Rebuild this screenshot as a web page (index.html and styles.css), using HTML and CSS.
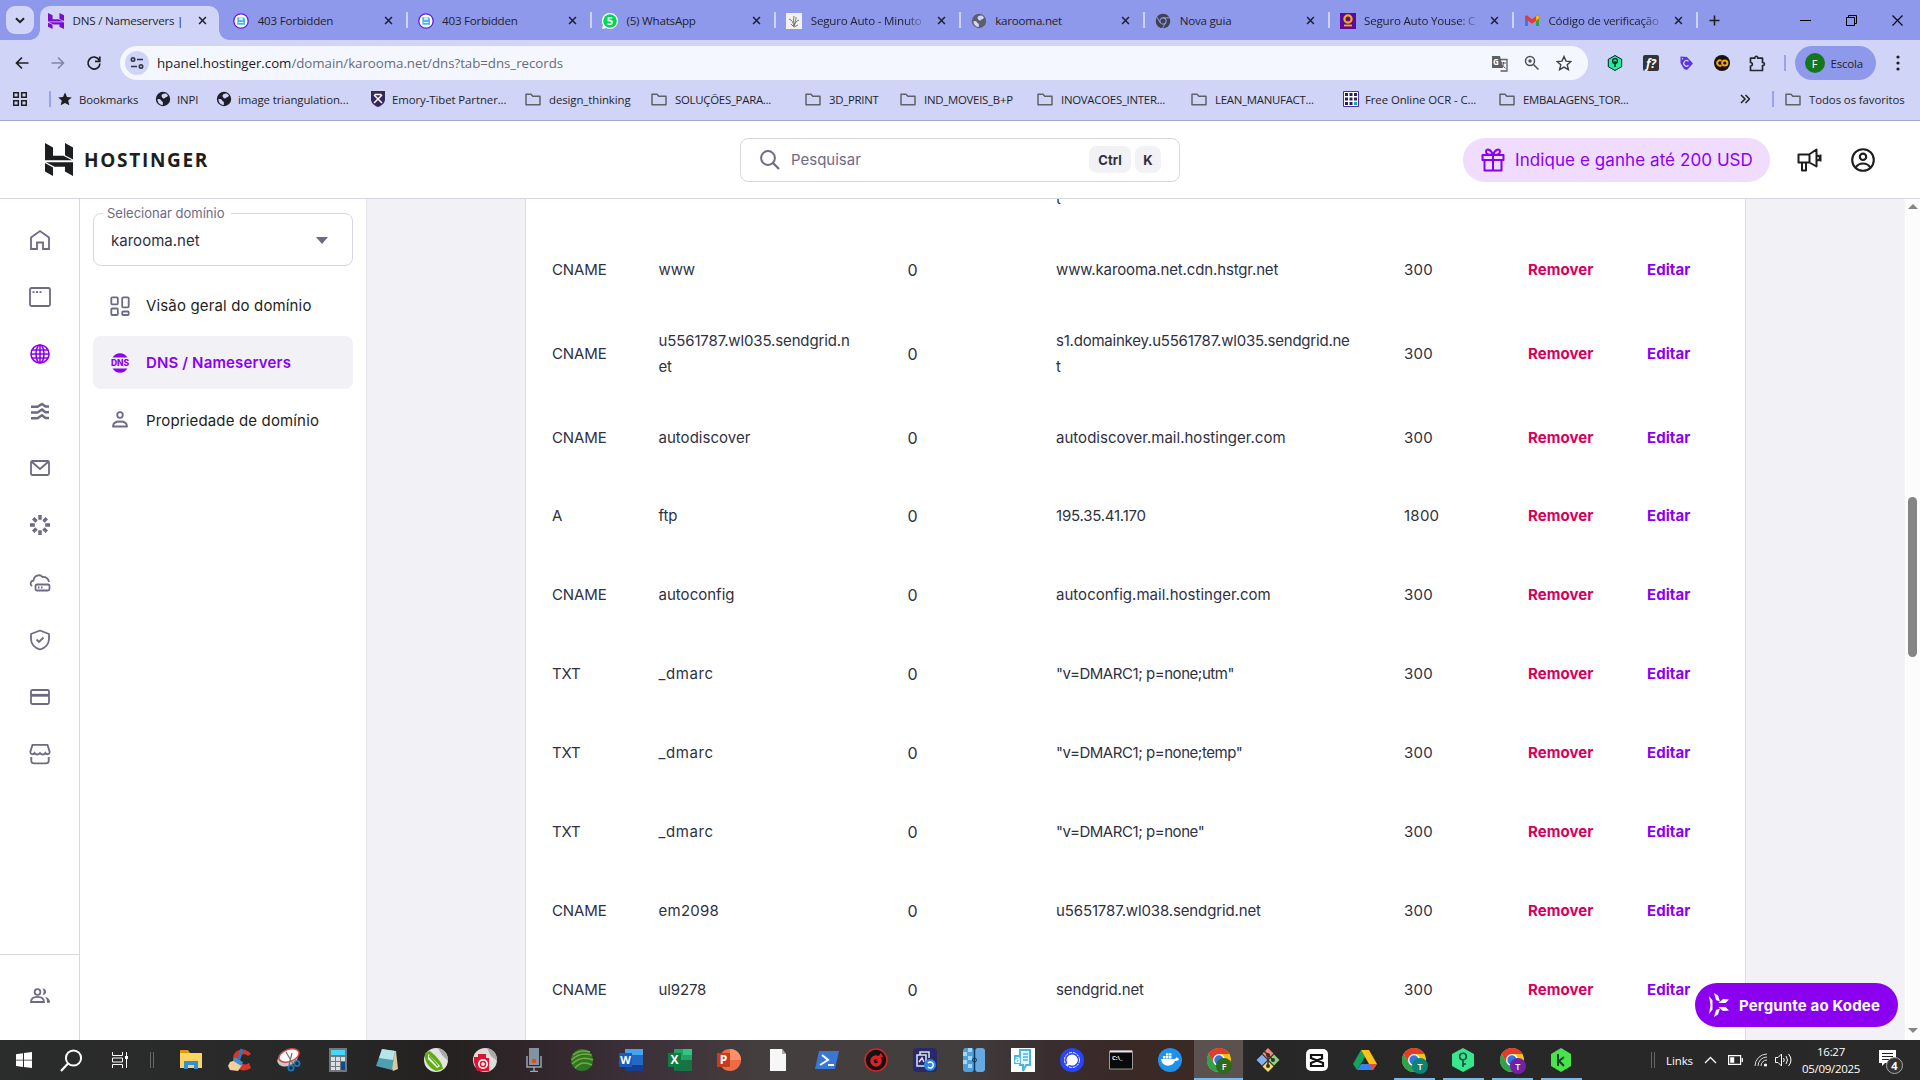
FILE: index.html
```html
<!DOCTYPE html>
<html lang="pt-BR">
<head>
<meta charset="utf-8">
<title>DNS / Nameservers | Hostinger</title>
<link rel="stylesheet" href="styles.css">
</head>
<body>
<svg class="defs" aria-hidden="true">
  <symbol id="x" viewBox="0 0 10 10"><path d="M1.2 1.2l7.6 7.6M8.8 1.2L1.2 8.8" stroke="#1f1f2b" stroke-width="1.7"/></symbol>
  <symbol id="folder" viewBox="0 0 16 16"><path d="M1 3.2h5l1.8 2H15v8.6H1z" fill="none" stroke="#5f6368" stroke-width="1.5" stroke-linejoin="round"/></symbol>
  <symbol id="globe" viewBox="0 0 16 16"><circle cx="8" cy="8" r="7.2" fill="currentColor"/><path d="M2.5 8.2c1.8-.4 3.2.3 3.6 1.3.4 1.1 1.8.6 1.8 2.2v2.2c-3 .2-5.5-2.300-5.400-5.700zM6.500 4.500c.8-1.500 2.500-2.200 4.300-1.900 1 .6 1.700 1.300 2.200 2.200-1 .5-.7 1.500-1.900 1.500S10 7.800 8.800 7.600 6.700 6.200 6.500 4.500z" fill="#d0d5f8"/></symbol>
  <symbol id="hmark" viewBox="0 0 28 33"><path d="M0 0l8 4.500v8.300h10.500L27 17.300H0zM20 0l8 4.500v12l-8-4.300zM0 20l8 4.400V33l-8-4.500zM1 19.300h27V33l-8-4.500v-4.800H9.600z" fill="currentColor"/></symbol>
  <symbol id="disk" viewBox="0 0 16 16"><circle cx="8" cy="8" r="7.200" fill="#fff" stroke="#5b1fe0" stroke-width="1.300"/><path d="M4.300 4.300h6.200l1.500 1.300v6.200H4.300z" fill="#4db4f4"/><path d="M6 4.300h4v2.800H6z" fill="#c9e9fc"/><path d="M5.500 9.500h5" stroke="#e7f6ff"/></symbol>
  <symbol id="chrome" viewBox="0 0 24 24"><circle cx="12" cy="12" r="12" fill="#fbc116"/><path d="M1.600 6A12 12 0 0 1 22.400 6H12L6.800 15z" fill="#e33b2e"/><path d="M1.600 6L7 15.500l5.500 2.500L12 24A12 12 0 0 1 1.600 6z" fill="#2fa24c"/><circle cx="12" cy="12" r="6" fill="#fff"/><circle cx="12" cy="12" r="4.700" fill="#2f78e4"/></symbol>
</svg>

<header class="browser">
  <div class="tabstrip">
    <div class="tabmenu"><svg width="10" height="7" viewBox="0 0 10 7"><path d="M1 1.200l4 4 4-4" fill="none" stroke="#1f1f1f" stroke-width="2"/></svg></div>
    <div class="tab tab-active"><svg class="fav purple" viewBox="0 0 28 33" preserveAspectRatio="none"><use href="#hmark"/></svg><span class="title">DNS / Nameservers |</span><svg class="close"><use href="#x"/></svg></div>
    <div class="tab"><svg class="fav"><use href="#disk"/></svg><span class="title">403 Forbidden</span><svg class="close"><use href="#x"/></svg></div>
    <div class="tab"><svg class="fav"><use href="#disk"/></svg><span class="title">403 Forbidden</span><svg class="close"><use href="#x"/></svg></div>
    <div class="tab"><svg class="fav" viewBox="0 0 16 16"><path d="M8 0a8 8 0 1 1 0 16c-1.500 0-2.500-.3-3.800-1L0 16l1-4A8 8 0 0 1 8 0z" fill="#fff"/><circle cx="8" cy="8" r="6.800" fill="#00d757"/><text x="8" y="12" text-anchor="middle" class="glyph" font-size="11">5</text></svg><span class="title">(5) WhatsApp</span><svg class="close"><use href="#x"/></svg></div>
    <div class="tab"><svg class="fav" viewBox="0 0 16 16"><path d="M0 0h16v16H0z" fill="#f1f1ef"/><path d="M3 6c3 1 4 3 5 7M8 3c-1 4 0 6 0 10M10 4c0 3-1 6-2 9M13 7c-3 1-4 3-5 6M5 11l3 3 4-2" fill="none" stroke="#777"/></svg><span class="title fade">Seguro Auto - Minuto</span><svg class="close"><use href="#x"/></svg></div>
    <div class="tab"><svg class="fav gray"><use href="#globe"/></svg><span class="title">karooma.net</span><svg class="close"><use href="#x"/></svg></div>
    <div class="tab"><svg class="fav" viewBox="0 0 16 16"><circle cx="8" cy="8" r="7.300" fill="#3f4350"/><circle cx="8" cy="8" r="3.100" fill="#3f4350" stroke="#8f99ec" stroke-width="1.100"/><path d="M8 4.800h7M5.200 9.600L1.700 3.700M10.700 9.600L7.300 15.500" stroke="#8f99ec"/></svg><span class="title">Nova guia</span><svg class="close"><use href="#x"/></svg></div>
    <div class="tab"><svg class="fav" viewBox="0 0 16 16"><path d="M0 0h16v16H0z" fill="#5b0a9e"/><circle cx="8" cy="6" r="3.600" fill="none" stroke="#f9b000" stroke-width="2.200"/><path d="M4 12.500h8" stroke="#f9b000" stroke-width="1.800"/></svg><span class="title fade">Seguro Auto Youse: C</span><svg class="close"><use href="#x"/></svg></div>
    <div class="tab"><svg class="fav" viewBox="0 0 16 16"><path d="M1 4v9h3V7z" fill="#3b79ef"/><path d="M15 4v9h-3V7z" fill="#2ba24c"/><path d="M1 3.500C1 2.500 2.500 2 3.500 2.800L8 6.300l4.500-3.500c1-.8 2.500-.3 2.500.7v2L8 10.800 1 5.500z" fill="#ea3a2d"/><path d="M12 3.200c1.500-1.200 3-.5 3 .8v1.500L12 7.800z" fill="#fbbc05"/></svg><span class="title fade">Código de verificação</span><svg class="close"><use href="#x"/></svg></div>
    <svg class="newtab" viewBox="0 0 12 12"><path d="M6 .5v11M.5 6h11" stroke="#1f1f1f" stroke-width="1.700"/></svg>
    <div class="wincontrols">
      <svg width="11" height="12" viewBox="0 0 11 12"><path d="M0 6.500h11" stroke="#000"/></svg>
      <svg width="11" height="11" viewBox="0 0 11 11"><path d="M.5 2.500h8v8h-8zM2.500 2.500v-2h8v8h-2" fill="none" stroke="#000"/></svg>
      <svg width="11" height="11" viewBox="0 0 11 11"><path d="M.5.500l10 10M10.500.5l-10 10" stroke="#000" stroke-width="1.100"/></svg>
    </div>
  </div>
  <div class="toolbar">
    <div class="navbtns">
      <svg width="16" height="16" viewBox="0 0 16 16"><path d="M14.500 8H2.500M8 2.500L2.500 8 8 13.500" fill="none" stroke="#1f1f1f" stroke-width="1.700"/></svg>
      <svg width="16" height="16" viewBox="0 0 16 16"><path d="M1.500 8h12M8 2.500l5.500 5.500L8 13.500" fill="none" stroke="#8286a3" stroke-width="1.600"/></svg>
      <svg width="16" height="16" viewBox="0 0 16 16"><path d="M13.200 5A6 6 0 1 0 14 8.500M13.800 1.500v4.800H9" fill="none" stroke="#1f1f1f" stroke-width="1.700"/></svg>
    </div>
    <div class="omnibox">
      <div class="siteinfo"><svg width="14" height="14" viewBox="0 0 14 14"><g fill="none" stroke="#30333d" stroke-width="1.600"><circle cx="3" cy="3.500" r="1.700"/><path d="M7 3.500h6M1 10.500h6"/><circle cx="11" cy="10.500" r="1.700"/></g></svg></div>
      <span class="url"><b>hpanel.hostinger.com</b>/domain/karooma.net/dns?tab=dns_records</span>
      <div class="omniicons">
        <svg width="17" height="17" viewBox="0 0 17 17"><path d="M1 1h8l3 12H1z" fill="#5d6066"/><path d="M8 4.500h8V16H9.500" fill="none" stroke="#5d6066" stroke-width="1.300"/><text x="2" y="9.500" class="glyph" font-size="8">G</text><path d="M10 8h5M12.500 7v1c0 2-1 4-2.500 5M11 9.500l3.500 4" fill="none" stroke="#5d6066"/></svg>
        <svg width="16" height="16" viewBox="0 0 16 16"><g fill="none" stroke="#4c4f57" stroke-width="1.500"><circle cx="6" cy="6" r="4.500"/><path d="M9.500 9.500l5 5"/></g><circle cx="6" cy="6" r="1.700" fill="#4c4f57"/></svg>
        <svg width="16" height="16" viewBox="0 0 16 16"><path d="M8 1.500l2 4.600 5 .4-3.800 3.300 1.200 4.900L8 12.100l-4.400 2.600 1.200-4.900L1 6.500l5-.4z" fill="none" stroke="#3d4048" stroke-width="1.400"/></svg>
      </div>
    </div>
    <div class="extensions">
      <svg width="16" height="16" viewBox="0 0 16 16"><path d="M8 .5l6.700 3.800v7.400L8 15.500 1.300 11.700V4.300z" fill="#1feea0" stroke="#071c17"/><circle cx="8" cy="6" r="2.400" fill="none" stroke="#071c17" stroke-width="1.300"/><path d="M8 6v6" stroke="#071c17" stroke-width="1.300"/></svg>
      <svg width="16" height="16" viewBox="0 0 16 16"><rect width="16" height="16" rx="2" fill="#333338"/><text x="8" y="12.500" text-anchor="middle" class="glyph ital" font-size="12">f?</text></svg>
      <svg width="16" height="16" viewBox="0 0 16 16"><path d="M2.500 1.500l6.500.5 6 6.500-6 6.500-3-1-3.500-6z" fill="#5b34e8"/><path d="M10.500 6.300a2.800 2.800 0 1 0 0 4" fill="none" stroke="#d0d5f8" stroke-width="1.200"/><circle cx="4.500" cy="3.800" r=".8" fill="#d0d5f8"/></svg>
      <svg width="16" height="16" viewBox="0 0 16 16"><circle cx="8" cy="8" r="8" fill="#17120c"/><g fill="none" stroke="#f0a31b" stroke-width="2"><path d="M7.500 5.800a2.700 2.700 0 1 0 0 4.400"/><circle cx="10.800" cy="8" r="2.600"/></g></svg>
      <svg width="17" height="17" viewBox="0 0 17 17"><path d="M1.500 3.200h4.300c-.2-2.500 3.200-2.500 3 0h4.700v4.300c2.500-.2 2.500 3.200 0 3v5H1.500V11c2.500 0 2.500-3.500 0-3.500z" fill="none" stroke="#25272e" stroke-width="1.700" stroke-linejoin="round"/></svg>
      <i class="vbar"></i>
    </div>
    <div class="profile"><span class="avatar">F</span>Escola</div>
    <svg class="kebab" viewBox="0 0 4 16"><circle cx="2" cy="2" r="1.600"/><circle cx="2" cy="8" r="1.600"/><circle cx="2" cy="14" r="1.600"/></svg>
  </div>
  <nav class="bookmarks">
    <span class="bm"><svg width="14" height="14" viewBox="0 0 14 14"><path d="M.7.700h4.600v4.600H.7zM8.700.700h4.600v4.600H8.700zM.7 8.700h4.600v4.600H.7zM8.700 8.700h4.600v4.600H8.700z" fill="none" stroke="#1f1f1f" stroke-width="1.500"/></svg><i class="vbar"></i></span>
    <span class="bm tight"><svg viewBox="0 0 16 16"><path d="M8 1.500l2 4.400 4.800.5-3.600 3.200 1.100 4.700L8 11.900l-4.300 2.400 1.100-4.700L1.200 6.400 6 5.900z" fill="#1f1f1f"/></svg>Bookmarks</span>
    <span class="bm tight"><svg><use href="#globe"/></svg>INPI</span>
    <span class="bm tight"><svg><use href="#globe"/></svg>image triangulation...</span>
    <span class="bm tight"><svg viewBox="0 0 16 16"><path d="M1 0h14v8c0 4-3 6.500-7 8-4-1.500-7-4-7-8z" fill="#35265f"/><path d="M4 4l8 8M12 4l-8 8M4.500 3.500h7" stroke="#fff" stroke-width="1.500"/></svg>Emory-Tibet Partner...</span>
    <span class="bm"><svg><use href="#folder"/></svg>design_thinking</span>
    <span class="bm up"><svg><use href="#folder"/></svg>SOLUÇÕES_PARA...</span>
    <span class="bm up"><svg><use href="#folder"/></svg>3D_PRINT</span>
    <span class="bm up"><svg><use href="#folder"/></svg>IND_MOVEIS_B+P</span>
    <span class="bm up"><svg><use href="#folder"/></svg>INOVACOES_INTER...</span>
    <span class="bm up"><svg><use href="#folder"/></svg>LEAN_MANUFACT...</span>
    <span class="bm tight"><svg viewBox="0 0 16 16"><path d="M.5.500h15v15H.5z" fill="#fff" stroke="#4a2eae"/><path d="M2 2h3v3H2zM6.500 2h3v3h-3zM11 2h3v3h-3zM2 6.500h3v3H2zM6.500 6.500h3v3h-3zM11 6.500h3v3h-3zM2 11h3v3H2zM6.500 11h3v3h-3z" fill="#202168"/><path d="M11 11h3v3h-3z" fill="#17a89e"/></svg>Free Online OCR - C...</span>
    <span class="bm up"><svg><use href="#folder"/></svg>EMBALAGENS_TOR...</span>
    <span class="bm"><svg width="10" height="10" viewBox="0 0 10 10" class="more"><path d="M1 1l4 4-4 4M5.500 1l4 4-4 4" fill="none" stroke="#1f1f1f" stroke-width="1.500"/></svg><i class="vbar"></i></span>
    <span class="bm"><svg><use href="#folder"/></svg>Todos os favoritos</span>
  </nav>
</header>

<header class="apphead">
  <div class="logo"><svg width="28" height="33"><use href="#hmark"/></svg><span>HOSTINGER</span></div>
  <div class="search">
    <svg width="20" height="20" viewBox="0 0 20 20"><circle cx="8" cy="8" r="6.900" fill="none" stroke="#6d6a85" stroke-width="2"/><path d="M13 13l6 6" stroke="#6d6a85" stroke-width="2.200"/></svg>
    <span class="ph">Pesquisar</span><kbd class="ctrl">Ctrl</kbd><kbd>K</kbd>
  </div>
  <div class="headright">
    <a class="gift"><svg width="24" height="24" viewBox="0 0 24 24"><path d="M1.500 7h21v5h-21zM3.500 12h17v10.500h-17zM12 7v15.500M12 7C10 1 5 0 5 3.800 5 6 7 7 12 7zM12 7c2-6 7-7 7-3.200C19 6 17 7 12 7z" fill="none" stroke="#8c00f0" stroke-width="2" stroke-linejoin="round"/></svg><span>Indique e ganhe até 200 USD</span></a>
    <svg width="26" height="24" viewBox="0 0 26 24"><path d="M19.500 1.500v17l-7-4H1.500v-8H12zM12.500 7v7.500M5 15v7.500h4V15M19.500 7.500c4.500-.5 4.500 5.500 0 5M23.500 6.500v7" fill="none" stroke="#1d1e20" stroke-width="2" stroke-linejoin="round"/></svg>
    <svg width="24" height="24" viewBox="0 0 24 24"><g fill="none" stroke="#1d1e20" stroke-width="2.100"><circle cx="12" cy="12" r="10.800"/><circle cx="12" cy="8.800" r="3.200"/><path d="M4.800 19.500c3-5.300 11.400-5.300 14.400 0"/></g></svg>
  </div>
</header>

<div class="app">
  <nav class="rail">
    <div class="railtop">
      <svg viewBox="0 0 24 24"><path d="M3 9.500L12 3l9 6.500V21h-6v-6.500H9V21H3z"/></svg>
      <svg viewBox="0 0 24 24"><rect x="2" y="3" width="20" height="18" rx="1.500"/><path d="M4.500 7.200h2M8 7.200h2M11.500 7.200h2"/></svg>
      <svg viewBox="0 0 24 24" class="on"><circle cx="12" cy="12" r="9"/><ellipse cx="12" cy="12" rx="4" ry="9"/><path d="M3 12h18M4 8h16M4 16h16M12 3v18"/></svg>
      <svg viewBox="0 0 24 24" class="thick"><path d="M3 7.800h6.500L14 5l3.500 2.500H21M3 13.500h6.500l4.500-3 3.500 2.800H21M3 19.200h6.500L14 16.200l3.500 2.800H21"/></svg>
      <svg viewBox="0 0 24 24"><rect x="3" y="5" width="18" height="14" rx="1.500"/><path d="M4 6l8 7 8-7"/></svg>
      <svg viewBox="0 0 24 24" class="burst"><path d="M12 2v4.800M18.800 5.200l-3.300 3.300M22 12h-4.800M18.800 18.800l-3.300-3.300M12 22v-4.800M5.200 18.800l3.300-3.300M2 12h4.800M5.200 5.200l3.300 3.300"/></svg>
      <svg viewBox="0 0 24 24"><path d="M4 15C1.500 13 2.500 10 5.500 9.500 6 4 12 3 14.500 6c3-.5 6 1.500 6.500 5"/><rect x="7.500" y="13.500" width="14" height="6" rx="1.500"/><path d="M10 16.500h1.500M13 16.500h1.500"/></svg>
      <svg viewBox="0 0 24 24"><path d="M12 2.500L21 6v5c0 5-4 9-9 10.500C7 20 3 16 3 11V6z" stroke-linejoin="round"/><path d="M8.500 11.500l2.500 2.500 4.500-4.500"/></svg>
      <svg viewBox="0 0 24 24"><rect x="3" y="5" width="18" height="14" rx="1.500"/><path d="M3 10.300h18" stroke-width="2.800"/></svg>
      <svg viewBox="0 0 24 24"><path d="M4.500 2.800h15l2.200 7.200c0 2.500-3 3-4.200 1-1.300 2-4 2-5.500 0-1.500 2-4.200 2-5.500 0-1.200 2-4.200 1.500-4.200-1zM3.300 15v4c0 1.500 1 2.300 2.500 2.300h12.400c1.500 0 2.500-.8 2.500-2.300v-4"/></svg>
    </div>
    <div class="railfoot"><svg viewBox="0 0 24 24"><circle cx="9.500" cy="8" r="2.900"/><path d="M3 18c0-4.200 3-5.200 6.500-5.200S16 13.800 16 18z"/><path d="M14.500 4.500c4.800 0 4.800 6.500 0 6.500 1.500-2 1.500-4.500 0-6.500zM17 12.800c2.800.8 5.200 2.500 5 6h-3c0-3-.5-4.500-2-6z" class="solid"/></svg></div>
  </nav>
  <aside class="side">
    <fieldset class="select"><legend>Selecionar domínio</legend><div class="value"><span>karooma.net</span><i class="caret"></i></div></fieldset>
    <a class="item"><svg viewBox="0 0 24 24"><rect x="3.300" y="3.300" width="6.500" height="7" rx="1"/><rect x="14.200" y="3.300" width="6.500" height="10" rx="1"/><rect x="3.300" y="14.500" width="6.500" height="6.500" rx="1"/><rect x="14.200" y="17.500" width="6.500" height="3.500" rx="1"/></svg>Visão geral do domínio</a>
    <a class="item item-on"><svg viewBox="0 0 24 24"><path d="M4.500 6.500C8 .8 16 .8 19.500 6.500zM4.500 17.500c3.500 5.700 11.500 5.700 15 0z" class="fillp"/><text x="12" y="15.200" text-anchor="middle" class="dns" textLength="18">DNS</text></svg>DNS / Nameservers</a>
    <a class="item"><svg viewBox="0 0 24 24"><circle cx="12" cy="7" r="2.800"/><path d="M5 18.500c0-3.500 3-5 7-5s7 1.500 7 5z" stroke-linejoin="round"/></svg>Propriedade de domínio</a>
  </aside>
  <main class="main">
    <section class="card">
      <div class="row cut"><span></span><span></span><span></span><span>t</span></div>
      <div class="row"><span>CNAME</span><span>www</span><span class="zero">0</span><span>www.karooma.net.cdn.hstgr.net</span><span class="ttl">300</span><a class="rm">Remover</a><a class="ed">Editar</a></div>
      <div class="row tall"><span>CNAME</span><span>u5561787.wl035.sendgrid.n<br>et</span><span class="zero">0</span><span class="snug">s1.domainkey.u5561787.wl035.sendgrid.ne<br>t</span><span class="ttl">300</span><a class="rm">Remover</a><a class="ed">Editar</a></div>
      <div class="row"><span>CNAME</span><span class="wide">autodiscover</span><span class="zero">0</span><span class="wide">autodiscover.mail.hostinger.com</span><span class="ttl">300</span><a class="rm">Remover</a><a class="ed">Editar</a></div>
      <div class="row"><span>A</span><span>ftp</span><span class="zero">0</span><span class="snug">195.35.41.170</span><span class="ttl">1800</span><a class="rm">Remover</a><a class="ed">Editar</a></div>
      <div class="row"><span>CNAME</span><span class="wide">autoconfig</span><span class="zero">0</span><span class="wide">autoconfig.mail.hostinger.com</span><span class="ttl">300</span><a class="rm">Remover</a><a class="ed">Editar</a></div>
      <div class="row"><span>TXT</span><span class="wider">_dmarc</span><span class="zero">0</span><span class="tighter">"v=DMARC1; p=none;utm"</span><span class="ttl">300</span><a class="rm">Remover</a><a class="ed">Editar</a></div>
      <div class="row"><span>TXT</span><span class="wider">_dmarc</span><span class="zero">0</span><span class="tighter">"v=DMARC1; p=none;temp"</span><span class="ttl">300</span><a class="rm">Remover</a><a class="ed">Editar</a></div>
      <div class="row"><span>TXT</span><span class="wider">_dmarc</span><span class="zero">0</span><span class="tighter">"v=DMARC1; p=none"</span><span class="ttl">300</span><a class="rm">Remover</a><a class="ed">Editar</a></div>
      <div class="row"><span>CNAME</span><span class="ttl">em2098</span><span class="zero">0</span><span>u5651787.wl038.sendgrid.net</span><span class="ttl">300</span><a class="rm">Remover</a><a class="ed">Editar</a></div>
      <div class="row"><span>CNAME</span><span>ul9278</span><span class="zero">0</span><span>sendgrid.net</span><span class="ttl">300</span><a class="rm">Remover</a><a class="ed">Editar</a></div>
    </section>
  </main>
  <div class="scrollbar"><i class="up"></i><i class="thumb"></i><i class="down"></i></div>
  <button class="kodee"><svg width="22" height="24" viewBox="0 0 22 24"><path d="M1 3l3.500 4.500v9L1 21l1.500-9zM6 0l4 2.500 2 6-4-1.500zM10.500 10l4.500-4 6 .5-3.500 3.500zM10.500 14l4.500 4 6-.5-3.500-3.500zM6 24l4-2.500 2-6-4 1.500z" fill="#fff"/></svg>Pergunte ao Kodee</button>
</div>

<footer class="taskbar">
  <div class="sys">
    <svg width="16" height="16" viewBox="0 0 16 16"><path d="M0 2.200l7-1v6.500H0zM8 1l8-1v7.700H8zM0 8.500h7V15l-7-1zM8 8.500h8V16l-8-1z" fill="#fff"/></svg>
    <svg width="23" height="23" viewBox="0 0 23 23"><circle cx="13.500" cy="9" r="7.600" fill="none" stroke="#fff" stroke-width="2"/><path d="M8 14.500L1 22" stroke="#fff" stroke-width="2.200"/></svg>
    <svg width="17" height="16" viewBox="0 0 17 16"><path d="M.5 0v3.500h10V0M.5 16v-3.500h10V16M.5 6h10v4H.5zM14.500 0v16" fill="none" stroke="#fff"/><path d="M13 4h3v3h-3z" fill="#fff"/></svg>
    <i class="grip"></i>
  </div>
  <div class="apps">
    <span><svg viewBox="0 0 24 24"><path d="M1 2h8l2 3h12v15H1z" fill="#d99a10"/><path d="M1 5h22v15H1z" fill="#fcd462"/><path d="M5 21v-8h14v8h-4v-4H9v4z" fill="#338fdc"/></svg></span>
    <span><svg viewBox="0 0 24 24"><path d="M23 6C18-1 6 0 5 10s9 16 18 10l-2-5c-4 3-9 1-9-4s5-6 8-3z" fill="#d8352b"/><path d="M14 1l-3 10" stroke="#2b7bc4" stroke-width="3"/><path d="M2 14l6-2 6 5-4 6-8-1-2-4z" fill="#f3cf9b"/><path d="M6 11l8 5" stroke="#3a92d0" stroke-width="4"/></svg></span>
    <span><svg viewBox="0 0 24 24"><ellipse cx="10.500" cy="11" rx="10.500" ry="7" transform="rotate(-20 10.500 11)" fill="#c9c9c9"/><ellipse cx="12" cy="7.500" rx="10.500" ry="6" transform="rotate(-20 12 7.500)" fill="#fff" stroke="#d7443f" stroke-width="1.500"/><path d="M9 4l7 12M15 5l-3 12" stroke="#777" stroke-width="1.300"/><g fill="none" stroke="#1977c0" stroke-width="1.800"><circle cx="14" cy="20" r="2.600"/><circle cx="20" cy="15.500" r="2.600"/></g></svg></span>
    <span><svg viewBox="0 0 24 24"><path d="M3 0h18v24H3z" fill="#71797f"/><path d="M5 2h14v5H5z" fill="#47d6fb"/><path d="M5 9h4v4H5zM10 9h4v4h-4zM15 9h4v4h-4zM5 14h4v4H5zM10 14h4v4h-4zM5 19h4v3H5zM10 19h4v3h-4z" fill="#dce0e4"/><path d="M15 14h4v8h-4z" fill="#104c91"/></svg></span>
    <span><svg viewBox="0 0 24 24"><path d="M8 2l13 1 2 18-5 2z" fill="#d8c89b"/><path d="M7 1l13 2-3 19-16-4z" fill="#4f9fb0"/><path d="M7 1l13 2-2 9-14-2z" fill="#b6e5ea"/></svg></span>
    <span><svg viewBox="0 0 24 24"><circle cx="12" cy="12" r="12" fill="#e3e3e0"/><path d="M14 0a12 12 0 0 1 10 13l-6-6z" fill="#a9aaa8"/><path d="M1 5c-1 8 3 14 11 18l7-2c-1-7-6-12-13-18z" fill="#5fae10"/><path d="M4 6l12 12-3 2L4 11z" fill="#fff"/><path d="M5 8l9 10" stroke="#5fae10" stroke-width="1.500"/></svg></span>
    <span><svg viewBox="0 0 24 24"><circle cx="12" cy="12" r="12" fill="#dedddd"/><path d="M14 0a12 12 0 0 1 10 13l-6-5z" fill="#a9aaa8"/><path d="M1 14V9h4V6h8v4h3v13H4z" fill="#dc1430"/><circle cx="10" cy="16" r="5" fill="#fff"/><circle cx="10" cy="16" r="2.600" fill="none" stroke="#dc1430" stroke-width="1.500"/></svg></span>
    <span><svg viewBox="0 0 24 24"><path d="M7 0h10v17H7z" fill="#8293a3"/><path d="M5 8v11h14V8M12 19v4M8 23.500h8" fill="none" stroke="#9aa7b3" stroke-width="1.500"/><circle cx="12" cy="13" r="2.300" fill="#e64b18"/></svg></span>
    <span><svg viewBox="0 0 24 24"><circle cx="12" cy="12" r="11" fill="#2d7624"/><path d="M3 7C9 2 14 2 20 4M1.500 12c6-6 13-7 20-5M2 16c7-7 14-7 21-4M5 20c5-6 11-6 17-3" fill="none" stroke="#79a943" stroke-width="1.500"/></svg></span>
    <span><svg viewBox="0 0 24 24"><path d="M6 1h18v22H6z" fill="#2368c4"/><path d="M6 1h18v6H6z" fill="#42a5ee"/><path d="M6 17h18v6H6z" fill="#143f91"/><path d="M0 5h13v14H0z" fill="#195abe"/><text x="6.500" y="16" text-anchor="middle" class="glyph" font-size="11">W</text></svg></span>
    <span><svg viewBox="0 0 24 24"><path d="M6 1h18v22H6z" fill="#21a366"/><path d="M15 1h9v6h-9z" fill="#33c481"/><path d="M6 12h18v11H6z" fill="#187245"/><path d="M0 5h13v14H0z" fill="#107c41"/><text x="6.500" y="16" text-anchor="middle" class="glyph" font-size="12">X</text></svg></span>
    <span><svg viewBox="0 0 24 24"><circle cx="13" cy="12" r="11" fill="#ed6c47"/><path d="M13 1a11 11 0 0 1 11 11H13z" fill="#ff8f6b"/><path d="M0 5h13v14H0z" fill="#c43e1c"/><text x="6.500" y="16" text-anchor="middle" class="glyph" font-size="12">P</text></svg></span>
    <span><svg viewBox="0 0 24 24"><path d="M4 1h12l4 5v17H4z" fill="#f7f7f7"/><path d="M16 1v5h4z" fill="#aaa"/></svg></span>
    <span><svg viewBox="0 0 24 24"><path d="M4 3h20l-4 18H0z" fill="#3977d5"/><path d="M7 7l6 5-8 5M13 17h6" fill="none" stroke="#fff" stroke-width="2"/></svg></span>
    <span><svg viewBox="0 0 24 24"><circle cx="12" cy="12" r="11" fill="#121212" stroke="#df2026" stroke-width="1.500"/><circle cx="12" cy="13" r="4" fill="none" stroke="#df2026" stroke-width="3.500"/><path d="M12 13l3 1 2-5h2l-2-4-3 4h2z" fill="#df2026"/></svg></span>
    <span><svg viewBox="0 0 24 24"><rect width="24" height="24" rx="4" fill="#29286b"/><path d="M4 7h9v11H4zM7 7V4h9v6M6 14l3-4 2 4" fill="none" stroke="#dce5f8" stroke-width="1.500"/><circle cx="17" cy="17" r="6" fill="#2889dd"/><path d="M15 15a3 3 0 1 1 0 4" fill="none" stroke="#fff" stroke-width="1.500"/></svg></span>
    <span><svg viewBox="0 0 24 24"><rect x="1" y="0" width="11" height="24" rx="3" fill="#4ba0dd"/><rect x="13" y="0" width="10" height="24" rx="3" fill="#69a9e1"/><path d="M1 4h4v4H1zM6 0h4v4H6zM6 8h4v4H6zM1 12h4v4H1zM6 16h4v4H6z" fill="#a4d5f4"/><path d="M12.500 0v24" stroke="#173757" stroke-width="1.500"/><circle cx="12.500" cy="12" r="2" fill="none" stroke="#173757"/></svg></span>
    <span><svg viewBox="0 0 24 24"><path d="M0 0h24v24H0z" fill="#fff"/><path d="M9 2h10v15h-4l-3 6V17H9z" fill="#e4f7fd" stroke="#48b6df" stroke-width="2"/><path d="M12 6h5M12 9h5M12 12h5" stroke="#48b6df" stroke-width="1.500"/><path d="M3 7h7v9H3z" fill="#48b6df"/><text x="6.500" y="15" text-anchor="middle" class="glyph" font-size="10">a</text></svg></span>
    <span><svg viewBox="0 0 24 24"><circle cx="12" cy="12" r="12" fill="#2a45f7"/><circle cx="12" cy="12" r="7.500" fill="none" stroke="#fff" stroke-dasharray="3 1"/><path d="M12 6.500a5.500 5.500 0 1 1-2 10.500l-4 1 1.300-3A5.500 5.500 0 0 1 12 6.500z" fill="#fff"/></svg></span>
    <span><svg viewBox="0 0 24 24"><path d="M.5 3h23v18H.5z" fill="#090909" stroke="#9a9a9a"/><path d="M1 3.500h22" stroke="#e6e6e6" stroke-width="2"/><text x="3" y="11.500" class="glyph" font-size="6">C:\_</text></svg></span>
    <span><svg viewBox="0 0 24 24"><circle cx="12" cy="12" r="12" fill="#1d91ec"/><path d="M3 11h14l2-2c0 2 2 1 2 2-1 2-3 2-4 2-2 6-13 7-14-2zM5 8h2.500v2.500H5zM8 8h2.500v2.500H8zM11 8h2.500v2.500H11zM8 5.200h2.500v2.300H8zM11 5.200h2.500v2.300H11z" fill="#fff"/></svg></span>
    <span class="active run"><svg><use href="#chrome"/></svg><b class="badge green">F</b></span>
    <span><svg viewBox="0 0 24 24"><path d="M12 0l5.500 5.500L12 11 6.500 5.500z" fill="#f18b7a"/><path d="M6 6.500l5.500 5.500L6 17.500.5 12z" fill="#87aef0"/><path d="M18 6.500l5.500 5.500-5.500 5.500-5.500-5.500z" fill="#8fd37a"/><path d="M12 13l5.500 5.500L12 24l-5.500-5.500z" fill="#f4dc6b"/><path d="M8 3l9 9M12 7v12" stroke="#38302c" stroke-width="1.500"/><g fill="#38302c"><circle cx="12" cy="7" r="2"/><circle cx="17" cy="12" r="2"/><circle cx="12" cy="18" r="2"/></g></svg></span>
    <span><svg viewBox="0 0 24 24"><rect x="1" y="1" width="22" height="22" rx="5" fill="#fff"/><path d="M17 10V7H6v3l12 5v3H6v-3l12-5" fill="none" stroke="#111" stroke-width="2.200"/></svg></span>
    <span><svg viewBox="0 0 24 24"><path d="M8 2L0 16l4 6 8-13z" fill="#12a35c"/><path d="M8 2h8l8 14h-8z" fill="#fcc216"/><path d="M4 22l4-6h16l-4 6z" fill="#3581ed"/><path d="M20 22l4-6h-8z" fill="#e84b39"/></svg></span>
    <span class="run"><svg><use href="#chrome"/></svg><b class="badge teal">T</b></span>
    <span class="run"><svg viewBox="0 0 24 24"><path d="M12 0l11 6v12l-11 6L1 18V6z" fill="#37e68d"/><circle cx="12" cy="8.500" r="3.300" fill="none" stroke="#174a43" stroke-width="1.600"/><path d="M12 11v8M12 16h3" stroke="#174a43" stroke-width="1.600"/></svg></span>
    <span class="run"><svg><use href="#chrome"/></svg><b class="badge violet">T</b></span>
    <span class="run"><svg viewBox="0 0 24 24"><path d="M12 0l10 6v12l-10 6L2 18V6z" fill="#4be34d"/><path d="M9 6v12M15 9l-5 4 5 5" fill="none" stroke="#153f2b" stroke-width="2"/></svg></span>
  </div>
  <div class="tray">
    <i class="grip"></i><span class="links">Links</span>
    <svg width="13" height="8" viewBox="0 0 13 8"><path d="M1 7l5.500-5.500L12 7" fill="none" stroke="#fff" stroke-width="1.300"/></svg>
    <svg width="15" height="10" viewBox="0 0 15 10"><path d="M.6.600h12v8.800H.6zM14.300 3v4" fill="none" stroke="#fff" stroke-width="1.200"/><path d="M2.200 2.200h4v5.600h-4z" fill="#fff"/></svg>
    <svg class="wifi" width="14" height="14" viewBox="0 0 14 14"><path d="M1 13A12 12 0 0 1 13 1M4 13a9 9 0 0 1 9-9M7 13a6 6 0 0 1 6-6" fill="none" stroke="#ddd"/><circle cx="11.500" cy="12" r="1.600" fill="#fff"/></svg>
    <svg width="17" height="14" viewBox="0 0 17 14"><path d="M.5 4.500H3L6.500 1v12L3 9.500H.5zM8.500 5q1.500 2 0 4M11 3q3 4 0 8M13.500 1q5 6 0 12" fill="none" stroke="#fff"/></svg>
    <div class="clock"><span>16:27</span><span>05/09/2025</span></div>
    <div class="notif"><svg width="17" height="16" viewBox="0 0 17 16"><path d="M0 0h17v13H6l-3 3v-3H0z" fill="#fff"/><path d="M3 3.500h11M3 6.500h11M3 9.500h7" stroke="#222" stroke-width="1.200"/></svg><b>4</b></div>
  </div>
</footer>
</body>
</html>
```
FILE: styles.css
```css
* { box-sizing: border-box; }
body {
  margin: 0;
  width: 1920px;
  height: 1080px;
  overflow: hidden;
  display: flex;
  flex-direction: column;
  background: #fff;
  font-family: Inter, "Open Sans", sans-serif;
  color: #2f3142;
}
svg { display: block; flex: none; }
.defs { position: absolute; width: 0; height: 0; }
.glyph { font-family: "Open Sans", sans-serif; font-weight: 700; fill: #fff; }
.ital { font-style: italic; }

/* Browser chrome */
.browser {
  height: 121px;
  background: #d0d5f8;
  border-bottom: 1px solid #a0a7cb;
  font-family: "Open Sans", "Noto Sans", sans-serif;
  font-size: 12px;
  color: #1f1f2b;
  flex: none;
}
.tabstrip { height: 40px; background: #8f99ec; display: flex; align-items: stretch; padding-left: 6px; }
.tabmenu {
  width: 28px; height: 28px; margin: 6px 6px 0 0;
  border-radius: 9px; background: #d0d5f8;
  display: flex; align-items: center; justify-content: center;
}
.tab {
  width: 184.4px; height: 40px; flex: none;
  display: flex; align-items: center;
  padding: 1px 15px 0 10px;
  position: relative;
}
.tab:not(.tab-active)::after {
  content: ""; position: absolute; right: 0; top: 12px; width: 2px; height: 16px; background: #cdd2f6;
}
.tab-active {
  width: 179px; height: 34px; margin: 6px 4.200px 0 0; padding: 0 12px 5px 8px;
  background: #d0d5f8; border-radius: 10px 10px 0 0;
}
.tab-active::before, .tab-active::after {
  content: ""; position: absolute; bottom: 0; width: 10px; height: 10px;
}
.tab-active::before { left: -10px; background: radial-gradient(circle at 0 0, transparent 9.500px, #d0d5f8 10px); }
.tab-active::after { right: -10px; background: radial-gradient(circle at 100% 0, transparent 9.500px, #d0d5f8 10px); }
.fav { width: 16px; height: 16px; margin-right: 8px; }
.purple { color: #7d0bd0; }
.gray { color: #5b5f6b; }
.title {
  flex: 1; white-space: nowrap; letter-spacing: -.22px;
  font-size: 11.600px; margin-right: 10px; padding-left: .5px;
}
.fade { -webkit-mask-image: linear-gradient(90deg, #000 95px, transparent 118px); }
.close { width: 9px; height: 9px; }
.newtab { width: 11px; height: 11px; margin: 15px 0 0 10.500px; }
.wincontrols { margin-left: auto; display: flex; align-items: center; gap: 35px; padding-right: 17px; }
.toolbar { height: 46px; display: flex; align-items: center; background: #d0d5f8; }
.navbtns { display: flex; gap: 20px; width: 120px; padding-left: 14px; }
.omnibox {
  width: 1468px; height: 34px; border-radius: 17px; background: #f4f7ff;
  display: flex; align-items: center; padding: 0 16px 0 5px;
}
.siteinfo { width: 24px; height: 24px; border-radius: 50%; background: #d0d5f8; display: flex; align-items: center; justify-content: center; }
.url { margin-left: 8px; font-size: 13.300px; letter-spacing: -.04px; color: #686c78; flex: 1; white-space: nowrap; }
.url b { font-weight: 400; color: #1b1c22; }
.omniicons { display: flex; gap: 16px; }
.extensions { display: flex; align-items: center; gap: 19.500px; margin-left: 19px; }
.vbar { width: 2px; height: 16px; background: #9aa4ee; }
.extensions .vbar { margin-left: -2px; }
.profile {
  margin-left: 9px; width: 81px; height: 34px; border-radius: 17px; background: #8f99ec;
  display: flex; align-items: center; gap: 6px; padding-left: 10px; font-size: 11.500px; letter-spacing: -.2px;
}
.avatar { width: 20px; height: 20px; border-radius: 50%; background: #15771c; color: #fff; display: flex; align-items: center; justify-content: center; font-size: 11px; }
.kebab { width: 4px; height: 16px; margin-left: 20px; fill: #1f1f1f; }
.bookmarks {
  height: 26px;
  display: grid; align-items: center;
  grid-template-columns: 44px 98px 61px 154px 155px 126px 154px 95px 137px 154px 152px 156px 241px 45px 130px;
  padding-left: 13px;
}
.bm { display: flex; align-items: center; gap: 8px; white-space: nowrap; font-size: 11.400px; letter-spacing: -.08px; }
.bm svg:not([width]) { width: 16px; height: 16px; }
.bm .vbar { margin-left: 14px; }
.tight { gap: 6px; }
.up { letter-spacing: -.26px; }

/* App header */
.apphead {
  height: 78px; flex: none; border-bottom: 1px solid #d8d7e0;
  display: grid; grid-template-columns: 740px 440px 1fr; align-items: center;
}
.logo { display: flex; align-items: center; gap: 11px; padding-left: 45px; color: #1d1e20; font: 700 19px "Open Sans", sans-serif; letter-spacing: 1.700px; }
.search {
  height: 44px; border: 1px solid #d8d7e0; border-radius: 8px;
  display: flex; align-items: center; padding: 0 18px 0 19px; font-size: 15px; color: #6d6a85;
}
.ph { margin-left: 11px; flex: 1; }
kbd { font: 700 13px Inter, sans-serif; color: #2f2d40; background: #f2f1f6; border-radius: 8px; height: 27px; width: 26px; display: flex; align-items: center; justify-content: center; }
.ctrl { width: 42px; margin-right: 4px; }
.headright { display: flex; align-items: center; justify-content: flex-end; gap: 28px; padding-right: 45px; }
.gift { width: 307px; height: 44px; border-radius: 22px; background: #efdcff; color: #8c00f0; display: flex; align-items: center; gap: 10px; padding-left: 18px; margin-right: -1px; font-size: 17px; letter-spacing: .08px; white-space: nowrap; }

/* App body */
.app { height: 841px; display: flex; position: relative; }
.rail { width: 80px; border-right: 1px solid #d8d7e0; display: flex; flex-direction: column; }
.rail svg { width: 24px; height: 24px; fill: none; stroke: #6d6a85; stroke-width: 1.800; }
.railtop { flex: 1; display: flex; flex-direction: column; align-items: center; gap: 33.100px; padding: 29px 0 0 1px; }
.rail .on { stroke: #8c00f0; stroke-width: 1.600; }
.rail .thick { stroke-width: 2.500; }
.rail .burst { stroke-width: 3.400; }
.rail .solid { fill: #6d6a85; stroke: none; }
.railfoot { height: 86px; border-top: 1px solid #d8d7e0; display: flex; justify-content: center; padding-top: 29px; }
.side { width: 287px; padding: 7px 13px 0 13px; border-right: 1px solid #e6e5ec; display: flex; flex-direction: column; }
.select {
  margin: 0 0 13px; padding: 0 24px 0 17px; height: 60px; width: 260px;
  border: 1px solid #d8d7e0; border-radius: 8px; font-size: 15px;
}
.select legend { font-size: 13px; line-height: 15px; color: #6d6a85; padding: 0 7px 0 4px; margin-left: -8px; }
.value { height: 38px; display: flex; align-items: center; justify-content: space-between; letter-spacing: .02px; }
.caret { border: 6px solid transparent; border-top: 7px solid #6d6a85; border-bottom: 0; }
.item { height: 53px; margin-bottom: 4.300px; border-radius: 8px; display: flex; align-items: center; gap: 14px; padding-left: 15px; font-size: 15px; letter-spacing: .15px; color: #1d1e20; white-space: nowrap; }
.item svg { width: 24px; height: 24px; fill: none; stroke: #6d6a85; stroke-width: 1.800; }
.item-on { background: #f2f1f6; color: #8c00f0; font-weight: 600; }
.item .fillp { fill: #8c00f0; stroke: none; }
.item .dns { fill: #8c00f0; stroke: none; font: 800 8.500px Inter, sans-serif; letter-spacing: 0; }
.main { flex: 1; background: #f2f1f6; padding-left: 158px; }
.card { width: 1221px; height: 841px; overflow: hidden; background: #fff; border: solid #dcdbe6; border-width: 0 1px; padding-left: 26px; }
.row {
  height: 78.880px; display: grid; align-items: center;
  grid-template-columns: 106.500px 249px 148.500px 348px 124px 119px 90px;
  font-size: 15px; line-height: 26px; white-space: nowrap; letter-spacing: -.13px;
}
.row.tall { height: 88.200px; }
.row.cut { height: 32px; align-items: start; }
.row.cut span { margin-top: -13px; }
.wide { letter-spacing: .02px; }
.wider { letter-spacing: .6px; }
.snug { letter-spacing: -.22px; }
.tighter { letter-spacing: -.45px; }
.zero { font-size: 16px; }
.ttl { letter-spacing: .25px; }
.rm, .ed { font-weight: 700; color: #d6005c; letter-spacing: .05px; }
.ed { color: #8c00f0; }
.scrollbar { width: 15px; background: #fcfcfc; display: flex; flex-direction: column; align-items: center; padding: 5px 0 7px; }
.scrollbar .up, .scrollbar .down { border: 5px solid transparent; border-bottom: 5px solid #858585; border-top: 0; }
.scrollbar .down { border-bottom: 0; border-top: 5px solid #858585; margin-top: auto; }
.thumb { width: 9px; height: 160px; border-radius: 5px; background: #858585; margin-top: 288px; }
.kodee {
  position: absolute; right: 22px; bottom: 13px; width: 203px; height: 44px; border: 0; border-radius: 22px;
  background: #8c00f0; color: #fff; display: flex; align-items: center; gap: 9px; padding: 0 0 0 13px;
  font: 700 15px Inter, sans-serif; letter-spacing: .15px; white-space: nowrap;
}

/* Taskbar */
.taskbar {
  height: 40px; flex: none; display: flex; color: #fff;
  background: linear-gradient(90deg, #2b2c2c 0, #282828 330px, #242120 440px, #31262a 530px, #3d3039 640px, #443f3e 770px, #423e3d 960px, #392d30 1050px, #3a2924 1140px, #3a2a25 1240px, #272727 1246px, #292929 100%);
  font-family: "Open Sans", "Noto Sans", sans-serif;
}
.sys { width: 166.500px; display: flex; align-items: center; padding-left: 16px; }
.sys svg:nth-child(2) { margin-left: 28px; }
.sys svg:nth-child(3) { margin-left: 29px; }
.grip { width: 4px; height: 16px; border: solid #666; border-width: 0 1px; }
.sys .grip { margin-left: 21px; }
.apps { display: flex; }
.apps span { width: 48.950px; display: flex; align-items: center; justify-content: center; position: relative; }
.apps svg { width: 24px; height: 24px; }
.run::after { content: ""; position: absolute; left: 4px; right: 4px; bottom: 0; height: 2px; background: #76b9ed; }
.active { background: #5b524f; }
.active::after { left: 0; right: 0; }
.badge { position: absolute; left: 22px; top: 18px; width: 16px; height: 16px; border-radius: 50%; font-size: 9px; font-weight: 600; display: flex; align-items: center; justify-content: center; }
.green { background: #2e6b1c; }
.teal { background: #0b8375; }
.violet { background: #7320a5; }
.tray { margin-left: auto; display: flex; align-items: center; gap: 11px; padding-right: 17px; font-size: 11.500px; }
.links { font-size: 11.500px; letter-spacing: -.1px; }
.wifi { margin-right: -4px; }
.clock { width: 68px; margin: 0 3px 0 -6px; display: flex; flex-direction: column; align-items: center; line-height: 17px; font-size: 11.500px; letter-spacing: -.3px; }
.notif { position: relative; width: 24px; height: 20px; }
.notif b { position: absolute; left: 7px; top: 7px; width: 17px; height: 17px; border-radius: 50%; border: 1px solid #aaa; background: #333; font-size: 11px; line-height: 15px; text-align: center; }
```
